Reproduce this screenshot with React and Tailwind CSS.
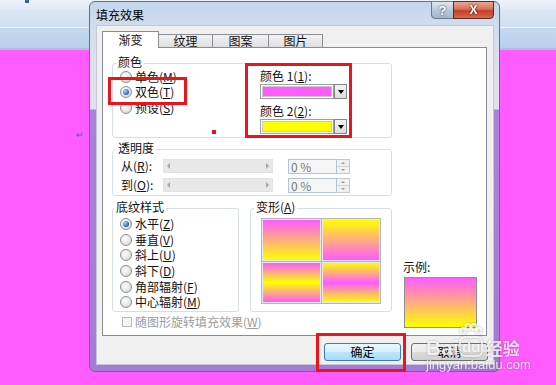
import React from 'react';

const Radio = ({ checked }) => (
  <span className="w-[12px] h-[12px] shrink-0 rounded-full border border-[#8e8f8f] bg-[radial-gradient(circle_at_40%_35%,#ffffff,#e6e6e6_55%,#cdcdcd)] flex items-center justify-center">
    {checked && (
      <span className="w-[6px] h-[6px] rounded-full bg-[radial-gradient(circle_at_35%_35%,#a8dcff,#2a72c0_60%,#0f3f7e)]" />
    )}
  </span>
);

const RadioRow = ({ checked, children, rowClass }) => (
  <div className={`flex items-center gap-[3px] ${rowClass}`}>
    <Radio checked={checked} />
    <span className="leading-[14px] whitespace-nowrap">{children}</span>
  </div>
);

const GroupBox = ({ label, labelClass, className, children }) => (
  <div className={`border border-[#d5dfe5] rounded-[3px] ${className}`}>
    <div className={`-mt-[9px] ${labelClass} w-fit h-[14px] bg-white px-[2px] leading-[14px]`}>{label}</div>
    {children}
  </div>
);

const ColorCombo = ({ swatch }) => (
  <div className="flex h-[15px] w-[87px]">
    <div className="flex-1 border border-[#a0a0a0] bg-white p-[1px]">
      <div className={`h-full border border-[#c9c9c9] ${swatch}`} />
    </div>
    <div className="w-[13px] border border-[#858585] bg-[linear-gradient(to_bottom,#f4f4f4,#dcdcdc)] flex items-center justify-center">
      <span className="border-x-[3px] border-x-transparent border-t-[4px] border-t-black" />
    </div>
  </div>
);

const SliderRow = ({ children }) => (
  <div className="flex items-center h-[14px] ml-[8px]">
    <span className="w-[42px] leading-[14px] whitespace-nowrap">{children}</span>
    <div className="w-[110px] h-[14px] bg-[#e8e8e8] border border-[#e2e2e2] flex items-center justify-between px-[3px]">
      <span className="border-y-[3px] border-y-transparent border-r-[3px] border-r-[#a6a6a6]" />
      <span className="border-y-[3px] border-y-transparent border-l-[3px] border-l-[#a6a6a6]" />
    </div>
    <div className="ml-[15px] flex h-[15px]">
      <div className="w-[49px] border border-[#b3c4d8] bg-[#f5f5f5] text-[#7a7a7a] leading-[13px] pl-[2px]">0 %</div>
      <div className="w-[13px] flex flex-col border border-l-0 border-[#c8c8c8] bg-[#f0f0f0]">
        <div className="flex-1 flex items-center justify-center border-b border-[#d4d4d4]">
          <span className="border-x-[2px] border-x-transparent border-b-[2px] border-b-[#9a9a9a]" />
        </div>
        <div className="flex-1 flex items-center justify-center">
          <span className="border-x-[2px] border-x-transparent border-t-[2px] border-t-[#9a9a9a]" />
        </div>
      </div>
    </div>
  </div>
);

const Tab = ({ active, children, w }) =>
  active ? (
    <div className={`relative z-10 -mb-px h-[17px] ${w} bg-white border border-b-0 border-[#898c95] flex items-center justify-center`}>
      {children}
    </div>
  ) : (
    <div className={`h-[13px] ${w} -ml-px bg-[linear-gradient(to_bottom,#f2f2f2,#e0e0e0)] border border-b-0 border-[#898c95] flex items-center justify-center`}>
      {children}
    </div>
  );

const Dialog = () => (
  <div className="absolute left-[89px] top-[1px] w-[411px] h-[371px] rounded-[6px] border border-[#6e6a86] bg-[linear-gradient(to_bottom,#c5d7ed_0px,#d6e0ee_40px,#e3e0ec_107px,#a983da_108px,#a47bd6_100%)] flex flex-col pl-[6px] pr-[5px] pb-[6px]">
    {/* title bar */}
    <div className="h-[23px] flex items-start justify-between">
      <span className="mt-[6px] leading-[14px] text-black">填充效果</span>
      <div className="flex -mt-px">
        <div className="w-[23px] h-[18px] rounded-bl-[4px] border border-[#6a7a8e] bg-[linear-gradient(to_bottom,#dfe8f3,#b9c9dc_50%,#a3b6cc)] flex items-center justify-center">
          <span className="font-['Liberation_Sans',sans-serif] font-bold text-[13px] leading-none text-white drop-shadow-[0_0_1px_#2e3b4d]">?</span>
        </div>
        <div className="w-[41px] h-[18px] -ml-px rounded-br-[4px] border border-[#5b2a22] bg-[linear-gradient(to_bottom,#e9a898,#d6705a_45%,#c23f28_55%,#d56a4e)] flex items-center justify-center">
          <span className="font-['Liberation_Sans',sans-serif] font-bold text-[12px] leading-none text-white drop-shadow-[0_0_1px_#3a0c04]">X</span>
        </div>
      </div>
    </div>
    {/* client area */}
    <div className="flex-1 flex flex-col border border-[#c7c6d6] bg-[#f0f0f0] pt-[5px] pl-[5px]">
      <div className="h-[16px] flex items-end">
        <Tab active w="w-[57px]">渐变</Tab>
        <Tab w="w-[55px]">纹理</Tab>
        <Tab w="w-[57px]">图案</Tab>
        <Tab w="w-[55px]">图片</Tab>
      </div>
      <div className="w-[385px] h-[289px] bg-white border border-[#898c95] flex flex-col pl-[9px]">
        {/* 颜色 */}
        <GroupBox label="颜色" labelClass="ml-[3px]" className="mt-[15px] w-[280px] h-[75px]">
          <div className="flex">
            <div className="ml-[7px] w-[140px] flex flex-col">
              <RadioRow rowClass="h-[15.5px]">单色(<u>M</u>)</RadioRow>
              <RadioRow rowClass="h-[15.5px]" checked>双色(<u>T</u>)</RadioRow>
              <RadioRow rowClass="h-[15.5px]">预设(<u>S</u>)</RadioRow>
            </div>
            <div className="flex flex-col">
              <span className="leading-[14px]">颜色 1(<u>1</u>):</span>
              <div className="mt-[1px]">
                <ColorCombo swatch="bg-[#ff5bff]" />
              </div>
              <span className="mt-[5px] leading-[14px]">颜色 2(<u>2</u>):</span>
              <div className="mt-[1px]">
                <ColorCombo swatch="bg-[#ffff00]" />
              </div>
            </div>
          </div>
        </GroupBox>
        {/* 透明度 */}
        <GroupBox label="透明度" labelClass="ml-[3px]" className="mt-[11px] w-[280px] h-[47px]">
          <div className="mt-[4px] flex flex-col gap-[5px]">
            <SliderRow>从(<u>R</u>):</SliderRow>
            <SliderRow>到(<u>O</u>):</SliderRow>
          </div>
        </GroupBox>
        {/* bottom */}
        <div className="mt-[12px] flex">
          <div className="flex flex-col">
            <div className="flex gap-[11px]">
              <GroupBox label="底纹样式" labelClass="ml-[1px]" className="w-[127px] h-[104px]">
                <div className="mt-[2.5px] ml-[7px] flex flex-col">
                  <RadioRow rowClass="h-[15.6px]" checked>水平(<u>Z</u>)</RadioRow>
                  <RadioRow rowClass="h-[15.6px]">垂直(<u>V</u>)</RadioRow>
                  <RadioRow rowClass="h-[15.6px]">斜上(<u>U</u>)</RadioRow>
                  <RadioRow rowClass="h-[15.6px]">斜下(<u>D</u>)</RadioRow>
                  <RadioRow rowClass="h-[15.6px]">角部辐射(<u>F</u>)</RadioRow>
                  <RadioRow rowClass="h-[15.6px]">中心辐射(<u>M</u>)</RadioRow>
                </div>
              </GroupBox>
              <GroupBox label={<>变形(<u>A</u>)</>} labelClass="ml-[3px]" className="w-[142px] h-[104px]">
                <div className="mt-[4px] ml-[10px] w-[120px] h-[86px] grid grid-cols-2 gap-[1px] p-[1px] bg-[#b7b7bd]">
                  <div className="border border-[#e6e6ea] bg-[linear-gradient(to_bottom,#ff5bff,#ffff00)]" />
                  <div className="border border-[#e6e6ea] bg-[linear-gradient(to_bottom,#ffff00,#ff5bff)]" />
                  <div className="border border-[#e6e6ea] bg-[linear-gradient(to_bottom,#ff5bff,#ffff00_50%,#ff5bff)]" />
                  <div className="border border-[#e6e6ea] bg-[linear-gradient(to_bottom,#ffff00,#ff5bff_50%,#ffff00)]" />
                </div>
              </GroupBox>
            </div>
            <div className="mt-[4px] h-[12px] ml-[10px] flex items-center gap-[3px]">
              <span className="w-[10px] h-[10px] border border-[#b9b9b9] bg-[#f4f4f4]" />
              <span className="text-[#9c9c9c] leading-[14px]">随图形旋转填充效果(<u>W</u>)</span>
            </div>
          </div>
          <div className="ml-[11px] mt-[52px] flex flex-col">
            <span className="leading-[14px]">示例:</span>
            <div className="mt-[3px] ml-[1px] w-[73px] h-[51px] border border-[#8f8f8f] bg-[linear-gradient(to_bottom,#ff5bff,#ffff00)]" />
          </div>
        </div>
      </div>
      <div className="mt-[7px] flex justify-end gap-[10px] pr-[5px]">
        <button className="w-[77px] h-[18px] rounded-[3px] border border-[#3c7fb1] bg-[linear-gradient(to_bottom,#eaf6fd,#d9f0fc_50%,#bee6fd_51%,#a7d9f5)] leading-[16px] text-black">
          确定
        </button>
        <button className="w-[77px] h-[18px] rounded-[3px] border border-[#707070] bg-[linear-gradient(to_bottom,#f2f2f2,#ebebeb_50%,#dddddd_51%,#cfcfcf)] leading-[16px] text-black">
          取消
        </button>
      </div>
    </div>
  </div>
);

const Watermark = () => (
  <div className="absolute left-[426px] top-[323px] flex flex-col text-white/80 drop-shadow-[0_0_1px_rgba(60,60,60,0.45)] pointer-events-none">
    <div className="flex items-end">
      <span className="font-['Liberation_Sans',sans-serif] font-bold text-[21px] leading-[18px]">Bai</span>
      <span className="flex flex-col items-center w-[25px]">
        <svg width="24" height="13" viewBox="0 0 24 13" fill="none" stroke="currentColor" strokeWidth="2">
          <ellipse cx="4" cy="8" rx="2.5" ry="3" />
          <ellipse cx="9" cy="4" rx="2.5" ry="3" />
          <ellipse cx="15" cy="4" rx="2.5" ry="3" />
          <ellipse cx="20" cy="8" rx="2.5" ry="3" />
        </svg>
        <span className="font-['Liberation_Sans',sans-serif] font-bold text-[15px] leading-[17px] px-[1px] rounded-[6px] border-2 border-white/70">du</span>
      </span>
      <span className="ml-[2px] font-['Noto_Sans_CJK_SC',sans-serif] font-bold text-[17px] leading-[18px]">经验</span>
    </div>
    <span className="mt-[1px] font-['Liberation_Sans',sans-serif] text-[13px] leading-[14px]">jingyan.baidu.com</span>
  </div>
);

export default function App() {
  return (
    <div className="relative w-[556px] h-[385px] overflow-hidden bg-[#ff5bff] font-['Noto_Sans_CJK_SC','Noto_Sans',sans-serif] text-[12px] text-[#111]">
      {/* ribbon behind the dialog */}
      <div className="h-[50px] flex flex-col">
        <div className="h-[9px] bg-[linear-gradient(to_bottom,#eef3fa,#e1eaf6)] pl-[25px]">
          <span className="block w-[4px] h-[3px] bg-[#3b5f96]" />
        </div>
        <div className="h-[19px] bg-[linear-gradient(to_bottom,#dbe7f5,#cfdff2)] border-b border-[#eef4fb]" />
        <div className="flex-1 bg-[linear-gradient(to_bottom,#c6d9f0,#b9cfeb)] border-b-2 border-[#a9c1e2]" />
      </div>
      <div className="pl-[76px] pt-[74px]">
        <span className="text-[9px] leading-none text-[#7d4f80]">↵</span>
      </div>

      <Dialog />

      {/* annotation marks */}
      <div className="absolute left-[108px] top-[77px] w-[79px] h-[28px] border-[3px] border-[#e8151b]" />
      <div className="absolute left-[245px] top-[63px] w-[107px] h-[75px] border-[3px] border-[#e8151b]" />
      <div className="absolute left-[316px] top-[333px] w-[90px] h-[39px] border-[3px] border-[#e8151b]" />
      <div className="absolute left-[212px] top-[130px] w-[4px] h-[4px] bg-[#e8151b]" />

      <Watermark />
    </div>
  );
}
